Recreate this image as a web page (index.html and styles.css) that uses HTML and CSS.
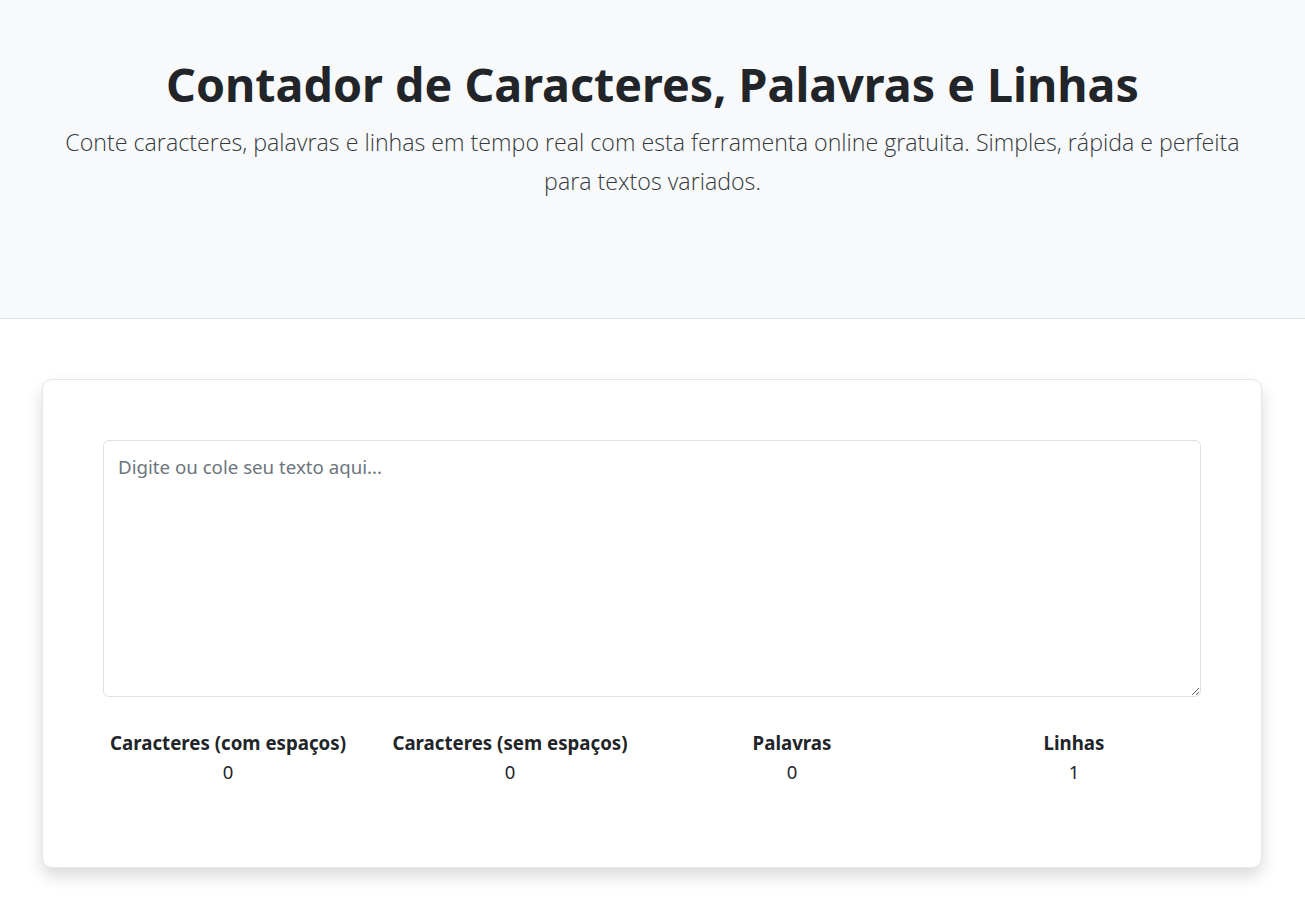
FILE: index.html
```html
<!DOCTYPE html>
<html lang="pt-BR">
<head>
    <meta charset="UTF-8">
    <meta name="viewport" content="width=device-width, initial-scale=1.0">
    <title>Contador de Caracteres, Palavras e Linhas</title>
    <link rel="stylesheet" href="styles.css">
</head>
<body>
    <header class="hero">
        <h1>Contador de Caracteres, Palavras e Linhas</h1>
        <p class="lead">Conte caracteres, palavras e linhas em tempo real com esta ferramenta online gratuita. Simples, rápida e perfeita para textos variados.</p>
    </header>

    <main class="main">
        <div class="card">
            <textarea id="textInput" class="text-input" placeholder="Digite ou cole seu texto aqui..."></textarea>
            <div class="stats">
                <div class="stat">
                    <div class="stat-label">Caracteres (com espaços)</div>
                    <div class="stat-value" id="charsWith">0</div>
                </div>
                <div class="stat">
                    <div class="stat-label">Caracteres (sem espaços)</div>
                    <div class="stat-value" id="charsWithout">0</div>
                </div>
                <div class="stat">
                    <div class="stat-label">Palavras</div>
                    <div class="stat-value" id="words">0</div>
                </div>
                <div class="stat">
                    <div class="stat-label">Linhas</div>
                    <div class="stat-value" id="lines">1</div>
                </div>
            </div>
        </div>
    </main>

    <script>
        const textInput = document.getElementById('textInput');

        function updateCounts() {
            const text = textInput.value;
            document.getElementById('charsWith').textContent = text.length;
            document.getElementById('charsWithout').textContent = text.replace(/\s/g, '').length;
            const words = text.trim().split(/\s+/).filter(w => w.length > 0);
            document.getElementById('words').textContent = words.length;
            document.getElementById('lines').textContent = text.split('\n').length;
        }

        textInput.addEventListener('input', updateCounts);
    </script>
</body>
</html>
```

FILE: styles.css
```css
body {
    font-family: "Noto Sans", "Open Sans", Arial, sans-serif;
    margin: 0;
    padding: 0;
    color: #212529;
    background-color: #fff;
}
.hero {
    background-color: #f8f9fa;
    border-bottom: 1px solid #dee2e6;
    padding: 57px 60px 0;
    height: 261px;
    text-align: center;
}
.hero h1 {
    margin: 0;
    font-size: 46.6px;
    font-weight: 700;
    line-height: 1.2;
    color: #212529;
}
.lead {
    margin: 10px 0 0;
    font-family: "Open Sans", "Noto Sans", sans-serif;
    font-size: 23.2px;
    font-weight: 300;
    line-height: 39px;
    color: #343a40;
}
.main {
    padding: 60px 43px 40px 42px;
}
.card {
    background-color: #fff;
    border: 1px solid #e3e6ea;
    border-radius: 10px;
    box-shadow: 0 8px 16px rgba(0, 0, 0, 0.15);
    padding: 60px 60px 80px;
}
.text-input {
    display: block;
    width: 100%;
    height: 257px;
    box-sizing: border-box;
    padding: 12px 14px;
    font-family: "Noto Sans", "Open Sans", sans-serif;
    font-size: 18.7px;
    line-height: 1.5;
    color: #212529;
    border: 1px solid #dee2e6;
    border-radius: 6px;
    resize: vertical;
    outline: none;
}
.text-input::placeholder {
    color: #6c757d;
}
.stats {
    display: grid;
    grid-template-columns: repeat(4, 1fr);
    margin: 32px -14px 0 -16px;
}
.stat {
    padding: 0 15px;
    text-align: center;
}
.stat-label {
    font-size: 18.7px;
    font-weight: 700;
    line-height: 28px;
}
.stat-value {
    font-size: 18.5px;
    line-height: 30px;
}
```
